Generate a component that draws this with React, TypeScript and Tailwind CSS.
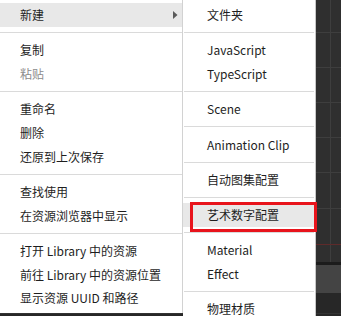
const font = { fontFamily: '"Noto Sans CJK SC", "Noto Sans", sans-serif' };

type Item = { label: string; disabled?: boolean; active?: boolean; sub?: boolean };

const leftGroups: Item[][] = [
  [{ label: '新建', active: true, sub: true }],
  [{ label: '复制' }, { label: '粘贴', disabled: true }],
  [{ label: '重命名' }, { label: '删除' }, { label: '还原到上次保存' }],
  [{ label: '查找使用' }, { label: '在资源浏览器中显示' }],
  [{ label: '打开 Library 中的资源' }, { label: '前往 Library 中的资源位置' }, { label: '显示资源 UUID 和路径' }],
];

const rightGroups: Item[][] = [
  [{ label: '文件夹' }],
  [{ label: 'JavaScript' }, { label: 'TypeScript' }],
  [{ label: 'Scene' }],
  [{ label: 'Animation Clip' }],
  [{ label: '自动图集配置' }],
  [{ label: '艺术数字配置', active: true }],
  [{ label: 'Material' }, { label: 'Effect' }],
  [{ label: '物理材质' }],
];

const Sep = ({ inset }: { inset?: boolean }) => (
  <div className={`h-px mt-[5.2px] mb-[5.4px] bg-[#dadada] ${inset ? 'mx-px' : ''}`} />
);

const Row = ({ item, pad }: { item: Item; pad: string }) => (
  <div
    className={`relative flex items-center h-[23.7px] text-[12px] leading-none ${pad} ${
      item.active ? 'bg-[#e8e8e8]' : ''
    } ${item.disabled ? 'text-[#8c8c8c]' : 'text-[#1e1e1e]'}`}
  >
    {item.label}
    {item.sub && (
      <svg className="absolute left-[173px] top-[8px]" width="5" height="8" viewBox="0 0 5 8">
        <polygon points="0,0 4.5,4 0,8" fill="#5a5a5a" />
      </svg>
    )}
  </div>
);

const Menu = ({ groups, pad, inset }: { groups: Item[][]; pad: string; inset?: boolean }) => (
  <div className="pt-[3.3px]">
    {groups.map((g, gi) => (
      <div key={gi}>
        {gi > 0 && <Sep inset={inset} />}
        {g.map((it, i) => (
          <Row key={i} item={it} pad={pad} />
        ))}
      </div>
    ))}
  </div>
);

export default function App() {
  return (
    <div className="relative w-[341px] h-[316px] overflow-hidden bg-[#2e2e2e]" style={font}>
      {/* scene canvas behind the menus */}
      <svg className="absolute inset-0" width="341" height="316">
        <rect x="0" y="0" width="341" height="263" fill="#2f2f2f" />
        {[32, 67, 102, 137, 172, 208].map((y) => (
          <line key={y} x1="0" x2="341" y1={y + 0.5} y2={y + 0.5} stroke="#3e3e3e" />
        ))}
        <line x1="330.5" x2="330.5" y1="0" y2="263" stroke="#3e3e3e" />
        <line x1="0" x2="341" y1="244.5" y2="244.5" stroke="#5e2a2a" />
        <rect x="0" y="262" width="341" height="3" fill="#1c1c1c" />
        <rect x="0" y="265" width="341" height="28" fill="#444444" />
        <rect x="0" y="293" width="341" height="23" fill="#272727" />
        <line x1="0" x2="341" y1="313.5" y2="313.5" stroke="#333333" />
      </svg>

      {/* main context menu */}
      <div className="absolute left-0 top-0 w-[183px] h-[313px] bg-white border-r border-[#d2d2d2]">
        <Menu groups={leftGroups} pad="pl-[20px]" />
      </div>

      {/* sub menu */}
      <div className="absolute left-[183px] top-0 w-[133px] h-[340px] bg-white border-r border-[#c8c8c8]">
        <Menu groups={rightGroups} pad="pl-[24px]" inset />
      </div>

      {/* annotation box */}
      <div className="absolute left-[190px] top-[202px] w-[127px] h-[30px] border-[3px] border-[#e8141c]" />
    </div>
  );
}
